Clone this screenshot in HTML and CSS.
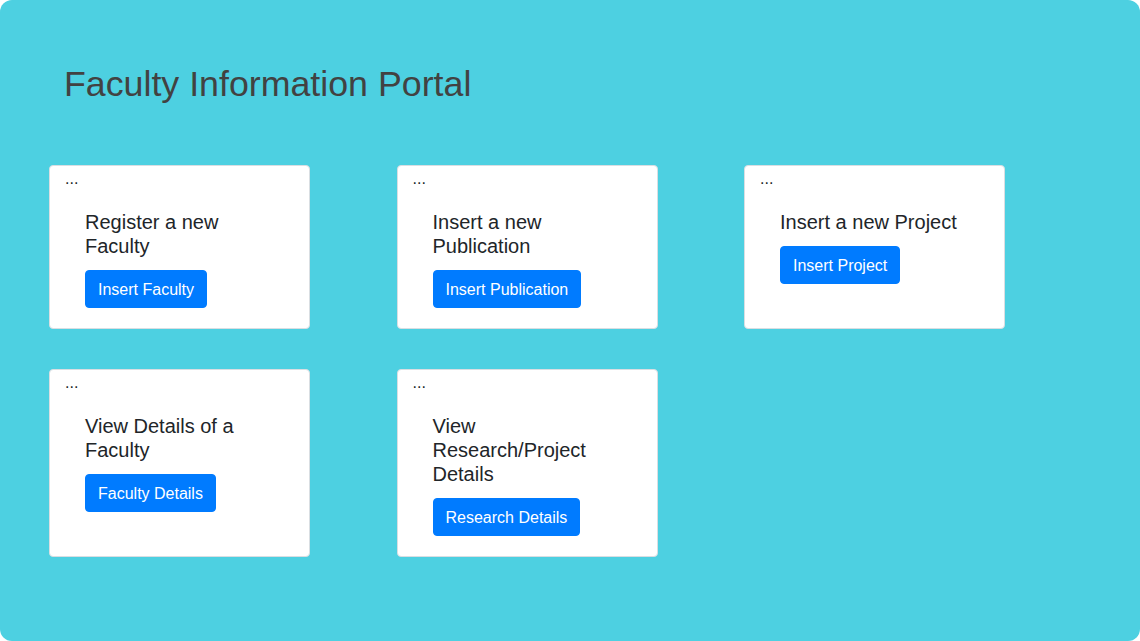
FILE: index.html
```html
<!DOCTYPE html>
<html lang="en">
<head>
<meta charset="utf-8">
<title>Faculty Information Portal</title>
<link rel="stylesheet" href="styles.css">
</head>
<body>
<div class="page">
  <h1 class="page-title">Faculty Information Portal</h1>
  <div class="grid">
    <div class="card">
      <div class="card-top">...</div>
      <div class="card-body">
        <h5 class="card-title">Register a new Faculty</h5>
        <a class="btn" href="#">Insert Faculty</a>
      </div>
    </div>
    <div class="card">
      <div class="card-top">...</div>
      <div class="card-body">
        <h5 class="card-title">Insert a new Publication</h5>
        <a class="btn" href="#">Insert Publication</a>
      </div>
    </div>
    <div class="card">
      <div class="card-top">...</div>
      <div class="card-body">
        <h5 class="card-title">Insert a new Project</h5>
        <a class="btn" href="#">Insert Project</a>
      </div>
    </div>
    <div class="card">
      <div class="card-top">...</div>
      <div class="card-body">
        <h5 class="card-title">View Details of a Faculty</h5>
        <a class="btn" href="#">Faculty Details</a>
      </div>
    </div>
    <div class="card">
      <div class="card-top">...</div>
      <div class="card-body">
        <h5 class="card-title">View Research/Project Details</h5>
        <a class="btn" href="#">Research Details</a>
      </div>
    </div>
  </div>
</div>
</body>
</html>
```
FILE: styles.css
```css
* { box-sizing: border-box; }
html, body {
  margin: 0;
  padding: 0;
  background: #ffffff;
  font-family: "Liberation Sans", Arial, sans-serif;
  color: #212529;
}
.page {
  height: 641px;
  background: #4dd0e1;
  border-radius: 12px;
  padding: 63px 49px 0 49px;
  overflow: hidden;
}
.page-title {
  margin: 0 0 59px 15px;
  font-size: 35.75px;
  font-weight: 400;
  line-height: 43px;
  color: #424242;
}
.grid {
  display: grid;
  grid-template-columns: repeat(3, 261px);
  column-gap: 86.5px;
  row-gap: 40px;
}
.card {
  background: #ffffff;
  border: 1px solid #d9dee2;
  border-radius: 4px;
  padding: 0 15px;
}
.card-top {
  padding-top: 1px;
  font-size: 16px;
  line-height: 24px;
  color: #212529;
}
.card-body {
  padding: 19px 20px 20px 20px;
}
.card-title {
  margin: 0 0 12px 0;
  font-size: 20px;
  font-weight: 400;
  line-height: 24px;
  color: #212529;
}
.btn {
  display: inline-block;
  background: #007bff;
  border: 1px solid #007bff;
  border-radius: 4px;
  color: #ffffff;
  text-decoration: none;
  font-family: "Liberation Sans", Arial, sans-serif;
  font-size: 16px;
  line-height: 24px;
  padding: 7px 12px 5px 12px;
}
```
